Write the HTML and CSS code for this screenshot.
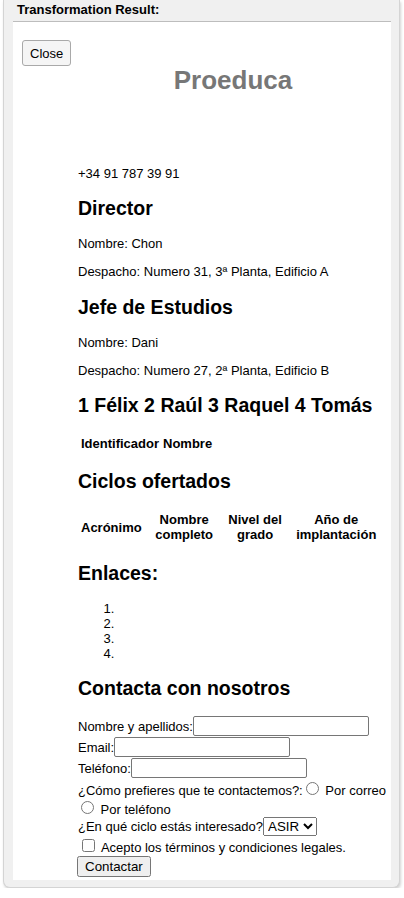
FILE: index.html
```html
<!DOCTYPE html>
<html lang="es">
<head>
<meta charset="utf-8">
<title>Transformation Result</title>
<link rel="stylesheet" href="styles.css">
</head>
<body>
<div class="panel">
  <div class="panel-title">Transformation Result:</div>
  <div class="sheet">
    <button class="close" type="button">Close</button>
    <div class="doc">
      <h1 class="brand">Proeduca</h1>
      <p>+34 91 787 39 91</p>
      <h2>Director</h2>
      <p>Nombre: Chon</p>
      <p>Despacho: Numero 31, 3ª Planta, Edificio A</p>
      <h2>Jefe de Estudios</h2>
      <p>Nombre: Dani</p>
      <p>Despacho: Numero 27, 2ª Planta, Edificio B</p>
      <h2>1 Félix 2 Raúl 3 Raquel 4 Tomás</h2>
      <table>
        <tr><th>Identificador</th><th>Nombre</th></tr>
      </table>
      <h2>Ciclos ofertados</h2>
      <table class="cycles">
        <tr><th>Acrónimo</th><th>Nombre completo</th><th>Nivel del grado</th><th>Año de implantación</th></tr>
      </table>
      <h2>Enlaces:</h2>
      <ol>
        <li></li>
        <li></li>
        <li></li>
        <li></li>
      </ol>
      <h2>Contacta con nosotros</h2>
      <form class="contact">
        <label>Nombre y apellidos:<input type="text" class="field"></label><br>
        <label>Email:<input type="email" class="field"></label><br>
        <label>Teléfono:<input type="tel" class="field"></label><br>
        ¿Cómo prefieres que te contactemos?:<label class="opt"><input type="radio" name="via" class="radio"> Por correo</label> <label class="opt"><input type="radio" name="via" class="radio"> Por teléfono</label><br>
        ¿En qué ciclo estás interesado?<select class="pick"><option>ASIR</option><option>DAM</option><option>DAW</option></select><br>
        <label><input type="checkbox"> Acepto los términos y condiciones legales.</label><br>
        <button type="submit" class="send">Contactar</button>
      </form>
    </div>
  </div>
</div>
</body>
</html>
```
FILE: styles.css
```css
body {
  margin: 0;
  background: #fff;
  font-family: "Liberation Sans", Arial, sans-serif;
  color: #000;
}

.panel {
  margin-left: 3px;
  width: 397px;
  box-sizing: border-box;
  background: #f0f0f0;
  border: 1px solid #d4d4d4;
  border-top: 0;
  border-radius: 0 0 7px 7px;
  padding: 0 8px 7px 9px;
  box-shadow: 1px 2px 3px rgba(0, 0, 0, 0.18);
}

.panel-title {
  font-size: 13px;
  font-weight: bold;
  line-height: 15px;
  padding: 2px 0 4px 4px;
}

.sheet {
  background: #fff;
  border-top: 1px solid #bdbdbd;
  padding: 18px 0 3px 9px;
  display: flow-root;
  font-size: 13px;
}

.close {
  float: left;
  height: 26px;
  padding: 0 7px;
  font-family: "Liberation Sans", Arial, sans-serif;
  font-size: 13px;
  color: #000;
  background: #f5f5f5;
  border: 1px solid #a9a9a9;
  border-radius: 3px;
}

.doc {
  margin-left: 56px;
}

.brand {
  font-size: 26px;
  color: #777;
  text-align: center;
  margin: 25px 3px 70px 0;
}

.doc h2 {
  font-size: 19.5px;
}

.cycles {
  margin-right: 3px;
}

.contact input,
.contact select,
.contact button {
  font-family: "Liberation Sans", Arial, sans-serif;
  font-size: 13.33px;
}

.field {
  width: 176px;
  height: 20px;
  box-sizing: border-box;
  margin: 0 0 1px;
  border: 1px solid #767676;
  border-radius: 2px;
  padding: 1px 2px;
  vertical-align: baseline;
}

.opt {
  white-space: nowrap;
}

.radio {
  margin: 3px 3px 0 3px;
}

.send {
  margin-left: -1px;
  margin-top: 1px;
}
```
